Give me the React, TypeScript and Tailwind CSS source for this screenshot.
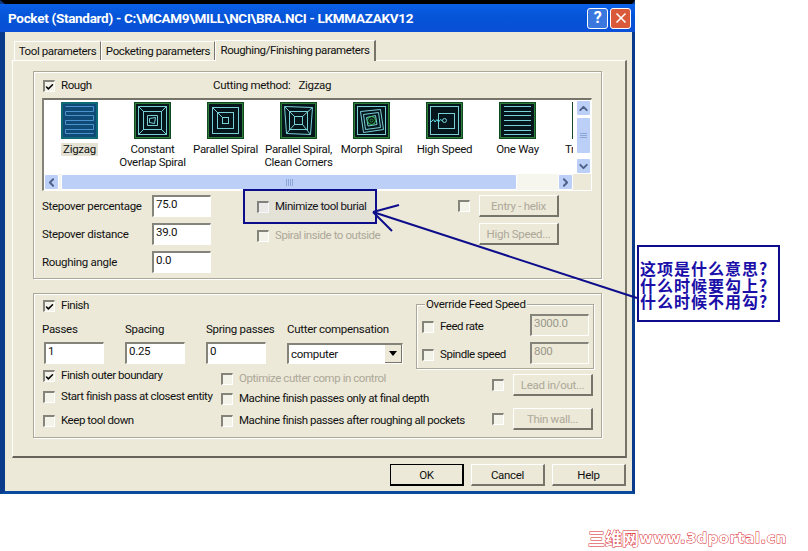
import * as React from "react"
import { ChevronLeft, ChevronRight, ChevronUp, ChevronDown, Check as CheckMark, X } from "lucide-react"

const FONT = "font-['Roboto','Noto_Sans',sans-serif]"

function Check({ checked, className = "" }: { checked?: boolean; className?: string }) {
    return (
        <div className={`w-[12px] h-[12px] shrink-0 flex items-center justify-center border-t-2 border-l-2 border-t-[#85847a] border-l-[#85847a] border-r border-b border-r-white border-b-white bg-[#f4f3ea] ${className}`}>
            {checked && <CheckMark size={10} strokeWidth={4} color="#000" />}
        </div>
    )
}

function CheckRow({ label, checked, disabled, className = "" }: { label: string; checked?: boolean; disabled?: boolean; className?: string }) {
    return (
        <div className={`flex items-center h-[12px] gap-[6px] whitespace-nowrap ${className}`}>
            <Check checked={checked} />
            <span className={`mb-[2px] tracking-[-0.45px] ${disabled ? "text-[#aca899]" : "text-[#111]"}`}>{label}</span>
        </div>
    )
}

function Field({ value, disabled, className = "" }: { value: string; disabled?: boolean; className?: string }) {
    return (
        <div className={`h-[22px] w-[59px] shrink-0 pl-[2px] leading-[14px] border-t-2 border-l-2 border-t-[#85847a] border-l-[#85847a] border-r border-b border-r-white border-b-white ${disabled ? "bg-[#ece9d8] text-[#9a978a]" : "bg-white text-[#111]"} ${className}`}>
            {value}
        </div>
    )
}

function Btn({ label, disabled, isDefault, className = "" }: { label: string; disabled?: boolean; isDefault?: boolean; className?: string }) {
    return (
        <div className={`h-[22px] flex items-center justify-center shrink-0 whitespace-nowrap ${isDefault ? "border border-black border-b-2 border-r-2 bg-[#ece9d8]" : "border-t border-l border-t-white border-l-white border-r-2 border-b-2 border-r-[#77756a] border-b-[#77756a]"} ${disabled ? "text-[#aca899]" : "text-[#111]"} ${className}`}>
            {label}
        </div>
    )
}

const frame = (children: React.ReactNode) => (
    <svg width="37" height="37" viewBox="0 0 37 37" fill="none" className="shrink-0">
        <rect x="0" y="0" width="37" height="37" fill="#0f4a22" />
        <rect x="1" y="1" width="35" height="35" fill="#2f7f3a" />
        <rect x="2" y="2" width="33" height="33" fill="#04161c" />
        <g stroke="#79cfd6" strokeWidth="1">{children}</g>
    </svg>
)

const icons: Record<string, React.ReactNode> = {
    zigzag: (
        <svg width="37" height="37" viewBox="0 0 37 37" fill="none" className="shrink-0">
            <rect width="37" height="37" fill="#0f6a78" />
            <rect x="2" y="2" width="33" height="33" fill="#104a76" />
            <path d="M4.5 4.5H32.5V9.5H4.5V13.5H32.5V18.5H4.5V22.5H32.5V27.5H4.5V31.5H32.5" stroke="#4a93cc" />
        </svg>
    ),
    overlap: frame(
        <>
            <rect x="4.5" y="4.5" width="28" height="28" />
            <rect x="9.5" y="9.5" width="18" height="18" />
            <path d="M13.5 13.5H23.5V23.5H13.5Z" />
            <path d="M15.5 16.5L21.5 15.5L20.5 21.5L15.5 20.5Z" />
            <path d="M4.5 4.5L9.5 9.5M32.5 4.5L27.5 9.5M4.5 32.5L9.5 27.5M32.5 32.5L27.5 27.5" />
        </>
    ),
    spiral: frame(
        <>
            <rect x="5.5" y="5.5" width="26" height="26" />
            <rect x="10.5" y="10.5" width="16" height="16" />
            <rect x="15.5" y="15.5" width="6" height="6" />
            <path d="M5.5 5.5L15.5 15.5" />
        </>
    ),
    clean: frame(
        <>
            <path d="M4.5 4.5L32.5 5.5L30.5 32.5L6.5 31.5Z" />
            <rect x="9.5" y="9.5" width="18" height="18" />
            <rect x="14.5" y="14.5" width="8" height="8" />
            <path d="M4.5 4.5L14.5 14.5M32.5 5.5L22.5 14.5M6.5 31.5L14.5 22.5M30.5 32.5L22.5 22.5" />
        </>
    ),
    morph: frame(
        <>
            <rect x="4.5" y="4.5" width="28" height="28" />
            <path d="M7.5 9.5L27.5 7.5L30.5 27.5L10.5 30.5Z" />
            <path d="M10.5 12.5L25.5 10.5L27.5 25.5L12.5 27.5Z" />
            <path d="M13.5 15.5L22.5 13.5L24 22.5L15 24Z" />
            <circle cx="18.5" cy="18.5" r="4" stroke="#3fbf5a" />
            <circle cx="18.5" cy="18.5" r="1.5" stroke="#2f8a3a" />
        </>
    ),
    speed: frame(
        <>
            <rect x="4.5" y="4.5" width="28" height="28" />
            <rect x="12.5" y="11.5" width="16" height="15" />
            <circle cx="18.5" cy="18.5" r="2" />
            <path d="M5 20L7.5 17.5L9 20L11 17.5L12.5 20L14.5 17.5L16.5 19" stroke="#5ee0e8" />
        </>
    ),
    oneway: frame(
        <>
            <path d="M5 4.5H32M5 9.5H32M5 13.5H32M5 18.5H32M5 23.5H32M5 28.5H32M5 32.5H32" />
        </>
    ),
    trochoid: frame(<rect x="5.5" y="5.5" width="26" height="26" />),
}

const methods = [
    { icon: "zigzag", label: ["Zigzag"], selected: true },
    { icon: "overlap", label: ["Constant", "Overlap Spiral"] },
    { icon: "spiral", label: ["Parallel Spiral"] },
    { icon: "clean", label: ["Parallel Spiral,", "Clean Corners"] },
    { icon: "morph", label: ["Morph Spiral"] },
    { icon: "speed", label: ["High Speed"] },
    { icon: "oneway", label: ["One Way"] },
    { icon: "trochoid", label: ["True Spiral"] },
]

function ScrollBtn({ children }: { children: React.ReactNode }) {
    return (
        <div className="w-[15px] h-[16px] shrink-0 flex items-center justify-center rounded-[2px] bg-[#bcd0f7] border border-white text-[#4d6185]">
            {children}
        </div>
    )
}

export default function App() {
    return (
        <div className={`relative w-[808px] h-[551px] bg-white overflow-hidden text-[11.5px] leading-[14px] tracking-[-0.3px] ${FONT}`}>
            {/* WINDOW */}
            <div className="w-[635px] h-[494px] flex flex-col border-t-4 border-t-black border-l-[5px] border-l-[#0a3a8a] border-r-[3px] border-r-[#0a3a8a] border-b-[3px] border-b-[#0a4a9e]">
                {/* TITLE BAR */}
                <div className="h-[28px] -ml-[5px] -mr-[3px] shrink-0 flex items-center pl-[8px] pr-[4px] bg-gradient-to-b from-[#0a60e8] via-[#0553d6] to-[#0a50d8]">
                    <span className="flex-1 text-white font-bold text-[13.5px] tracking-[-0.3px] whitespace-nowrap">
                        {"Pocket (Standard) - C:\\MCAM9\\MILL\\NCI\\BRA.NCI - LKMMAZAKV12"}
                    </span>
                    <div className="w-[21px] h-[21px] rounded-[3px] border border-white bg-[#3a78e0] flex items-center justify-center text-white font-bold text-[16px]">?</div>
                    <div className="w-[21px] h-[21px] ml-[2px] rounded-[3px] border border-white bg-[#d9593a] flex items-center justify-center text-white">
                        <X size={16} strokeWidth={2.5} />
                    </div>
                </div>

                {/* BODY */}
                <div className="flex-1 flex flex-col bg-[#ece9d8] pl-[7px] pr-[5px]">
                    {/* TABS */}
                    <div className="h-[28px] shrink-0 flex items-end pl-[2px] text-[#111] whitespace-nowrap tracking-[-0.4px]">
                        <div className="h-[19px] w-[87px] flex items-center justify-center border-t border-l border-white border-r border-r-[#77756a]">Tool parameters</div>
                        <div className="h-[19px] w-[114px] flex items-center justify-center border-t border-l border-white border-r border-r-[#77756a]">Pocketing parameters</div>
                        <div className="relative z-10 -mb-px h-[21px] w-[161px] pb-[2px] flex items-center justify-center border-t border-l border-white border-r-2 border-r-[#77756a] bg-[#ece9d8]">Roughing/Finishing parameters</div>
                    </div>

                    {/* TAB PAGE */}
                    <div className="h-[398px] shrink-0 flex flex-col border-t border-l border-white border-r-2 border-r-[#77756a] border-b-2 border-b-[#66645a] pl-[20px] pt-[10px] text-[#111]">
                        {/* ROUGH GROUP */}
                        <div className="w-[569px] h-[208px] shrink-0 border border-[#aca899] shadow-[1px_1px_0_#fff,inset_1px_1px_0_#fff] pt-[8px] pl-[8px]">
                            <div className="flex items-center h-[12px] ml-px">
                                <CheckRow label="Rough" checked className="w-[170px]" />
                                <span className="mb-[2px]">Cutting method:</span>
                                <span className="ml-[8px] mb-[2px]">Zigzag</span>
                            </div>

                            {/* METHOD LIST */}
                            <div className="mt-[6px] w-[550px] h-[93px] flex flex-col border-t-2 border-l-2 border-t-[#77756a] border-l-[#85847a] border-r border-b border-r-white border-b-white bg-white">
                                <div className="flex h-[75px]">
                                    <div className="w-[531px] overflow-hidden flex pt-[2px] -ml-px">
                                        {methods.map((m) => (
                                            <div key={m.icon} className="w-[73px] shrink-0 flex flex-col items-center">
                                                {icons[m.icon]}
                                                <div className="mt-[4px] text-center leading-[13px] whitespace-nowrap">
                                                    {m.label.map((line) => (
                                                        <div key={line} className={m.selected ? "bg-[#e4e2d4] px-[2px]" : ""}>{line}</div>
                                                    ))}
                                                </div>
                                            </div>
                                        ))}
                                    </div>
                                    <div className="w-[16px] ml-[2px] shrink-0 flex flex-col items-center">
                                        <ScrollBtn><ChevronUp size={13} strokeWidth={3.5} /></ScrollBtn>
                                        <div className="w-[15px] h-[37px] mt-px rounded-[2px] bg-[#bcd0f7] border border-white flex flex-col items-center justify-center gap-px">
                                            <div className="w-[7px] h-px bg-[#8da6d8]" />
                                            <div className="w-[7px] h-px bg-[#8da6d8]" />
                                            <div className="w-[7px] h-px bg-[#8da6d8]" />
                                        </div>
                                        <div className="flex-1" />
                                        <ScrollBtn><ChevronDown size={13} strokeWidth={3.5} /></ScrollBtn>
                                    </div>
                                </div>
                                <div className="flex h-[16px] bg-[#f6f5ee]">
                                    <ScrollBtn><ChevronLeft size={13} strokeWidth={3.5} /></ScrollBtn>
                                    <div className="w-[456px] h-[16px] ml-[2px] rounded-[2px] bg-[#bcd0f7] border border-white flex items-center justify-center gap-px">
                                        <div className="w-px h-[7px] bg-[#8da6d8]" />
                                        <div className="w-px h-[7px] bg-[#8da6d8]" />
                                        <div className="w-px h-[7px] bg-[#8da6d8]" />
                                        <div className="w-px h-[7px] bg-[#8da6d8]" />
                                    </div>
                                    <div className="w-[41px] shrink-0" />
                                    <ScrollBtn><ChevronRight size={13} strokeWidth={3.5} /></ScrollBtn>
                                    <div className="flex-1 bg-[#ece9d8]" />
                                </div>
                            </div>

                            {/* ROUGH OPTIONS */}
                            <div className="flex mt-[4px]">
                                <div className="w-[169px] shrink-0 flex flex-col gap-[6px]">
                                    {[["Stepover percentage", "75.0"], ["Stepover distance", "39.0"], ["Roughing angle", "0.0"]].map(([label, value]) => (
                                        <div key={label} className="flex items-center justify-between h-[22px] whitespace-nowrap">
                                            <span>{label}</span>
                                            <Field value={value} />
                                        </div>
                                    ))}
                                </div>
                                <div className="w-[201px] shrink-0 ml-[46px] pt-[6px] flex flex-col gap-[17px]">
                                    <CheckRow label="Minimize tool burial" />
                                    <CheckRow label="Spiral inside to outside" disabled />
                                </div>
                                <div className="flex flex-col gap-[6px]">
                                    <div className="flex items-center h-[22px]">
                                        <Check />
                                        <Btn label="Entry - helix" disabled className="w-[80px] ml-[9px]" />
                                    </div>
                                    <Btn label="High Speed..." disabled className="w-[80px] ml-[21px]" />
                                </div>
                            </div>
                        </div>

                        {/* FINISH GROUP */}
                        <div className="w-[569px] h-[145px] mt-[14px] shrink-0 border border-[#aca899] shadow-[1px_1px_0_#fff,inset_1px_1px_0_#fff]">
                            <div className="flex h-[75px]">
                                <div className="w-[382px] shrink-0 pt-[6px] pl-[9px]">
                                    <CheckRow label="Finish" checked />
                                    <div className="flex mt-[10px] -ml-px h-[14px] whitespace-nowrap">
                                        <span className="w-[83px]">Passes</span>
                                        <span className="w-[81px]">Spacing</span>
                                        <span className="w-[81px]">Spring passes</span>
                                        <span>Cutter compensation</span>
                                    </div>
                                    <div className="flex mt-[6px] ml-px">
                                        <Field value="1" className="w-[60px]" />
                                        <Field value="0.25" className="w-[60px] ml-[21px]" />
                                        <Field value="0" className="w-[60px] ml-[21px]" />
                                        <div className="w-[116px] h-[21px] mt-px ml-[21px] pl-[2px] flex items-center justify-between border-t-2 border-l-2 border-t-[#85847a] border-l-[#85847a] border-r border-b border-r-white border-b-white bg-white">
                                            <span>computer</span>
                                            <div className="w-[17px] h-full flex items-center justify-center bg-[#ece9d8] border-r border-b border-[#77756a]">
                                                <svg width="8" height="5" viewBox="0 0 8 5"><path d="M0 0H8L4 5Z" fill="#000" /></svg>
                                            </div>
                                        </div>
                                    </div>
                                </div>

                                {/* OVERRIDE FEED SPEED */}
                                <div className="relative w-[178px] h-[65px] mt-[10px] border border-[#aca899] shadow-[1px_1px_0_#fff,inset_1px_1px_0_#fff] pl-[5px] pt-[9px]">
                                    <span className="absolute -top-[8px] left-[8px] px-px bg-[#ece9d8] whitespace-nowrap">Override Feed Speed</span>
                                    <div className="flex flex-col gap-[6px]">
                                        <div className="flex items-center h-[22px] pr-[4px] justify-between">
                                            <CheckRow label="Feed rate" className="mt-[4px]" />
                                            <Field value="3000.0" disabled />
                                        </div>
                                        <div className="flex items-center h-[22px] pr-[4px] justify-between">
                                            <CheckRow label="Spindle speed" className="mt-[4px]" />
                                            <Field value="800" disabled />
                                        </div>
                                    </div>
                                </div>
                            </div>

                            <div className="flex">
                                <div className="w-[187px] shrink-0 pl-[9px] flex flex-col">
                                    <CheckRow label="Finish outer boundary" checked className="mt-px" />
                                    <CheckRow label="Start finish pass at closest entity" className="mt-[9px]" />
                                    <CheckRow label="Keep tool down" className="mt-[12px]" />
                                </div>
                                <div className="w-[271px] shrink-0 flex flex-col">
                                    <CheckRow label="Optimize cutter comp in control" disabled className="mt-[4px]" />
                                    <CheckRow label="Machine finish passes only at final depth" className="mt-[8px]" />
                                    <CheckRow label="Machine finish passes after roughing all pockets" className="mt-[10px]" />
                                </div>
                                <div className="flex flex-col gap-[12px] mt-[5px]">
                                    <div className="flex items-center h-[22px]">
                                        <Check />
                                        <Btn label="Lead in/out..." disabled className="w-[80px] ml-[9px]" />
                                    </div>
                                    <div className="flex items-center h-[22px]">
                                        <Check />
                                        <Btn label="Thin wall..." disabled className="w-[80px] ml-[9px]" />
                                    </div>
                                </div>
                            </div>
                        </div>
                    </div>

                    {/* DIALOG BUTTONS */}
                    <div className="flex justify-end gap-[7px] pt-[6px] pr-px">
                        <Btn label="OK" isDefault className="w-[74px]" />
                        <Btn label="Cancel" className="w-[74px]" />
                        <Btn label="Help" className="w-[74px]" />
                    </div>
                </div>
            </div>

            {/* ANNOTATION */}
            <div className="absolute left-[243px] top-[189px] w-[134px] h-[35px] border-2 border-[#0d0d8c] bg-[#5050c0]/5 pointer-events-none" />
            <svg className="absolute left-0 top-0 pointer-events-none" width="808" height="551" fill="none">
                <path d="M637 298L373 212M373 212L399 205M373 212L392 231" stroke="#0d0d8c" strokeWidth="2" />
            </svg>
            <div className="absolute left-[637px] top-[245px] w-[143px] h-[77px] border-2 border-[#0d0d8c] bg-white pt-[13px] pl-px text-[#1a0fa8] font-bold text-[16px] leading-[16.5px] tracking-[1px] whitespace-nowrap font-['Noto_Sans_CJK_SC',sans-serif]">
                <div>这项是什么意思?</div>
                <div>什么时候要勾上?</div>
                <div>什么时候不用勾?</div>
            </div>

            {/* WATERMARK */}
            <div className="absolute left-[588px] top-[528px] h-[20px] flex items-center whitespace-nowrap font-bold text-white tracking-normal [-webkit-text-stroke:1px_#d8262c] [paint-order:stroke_fill] font-['DejaVu_Sans','Noto_Sans_CJK_SC',sans-serif]">
                <span className="text-[17px] font-['Noto_Sans_CJK_SC',sans-serif]">三维网</span>
                <span className="text-[14.5px] tracking-[0.6px]">www.3dportal.cn</span>
            </div>
        </div>
    )
}
